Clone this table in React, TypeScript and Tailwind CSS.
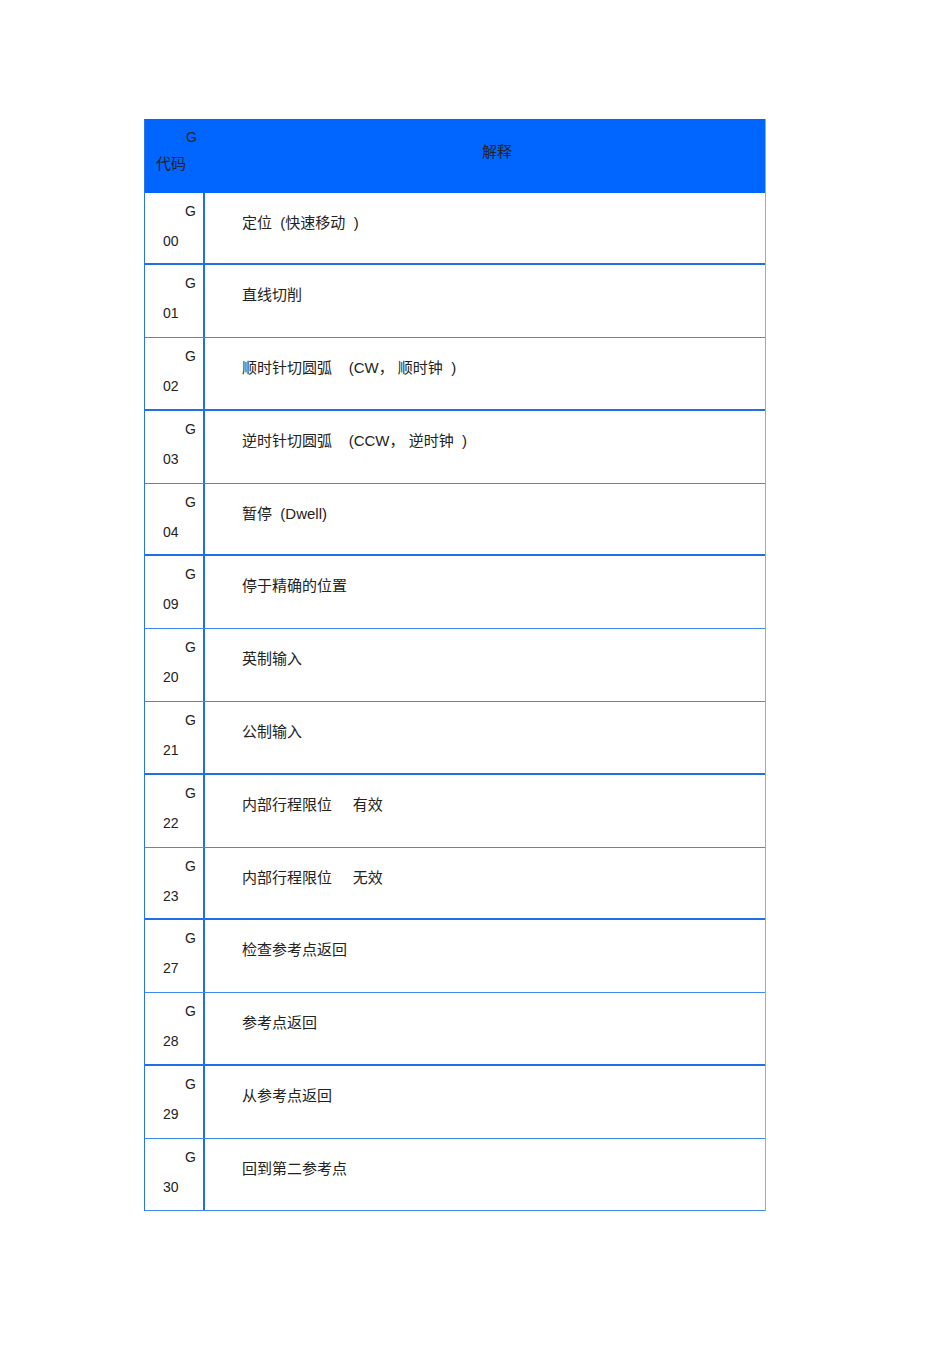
const rows: { code: string; text: string; h: number; thick: boolean }[] = [
  { code: "00", text: "定位  (快速移动  )", h: 72, thick: true },
  { code: "01", text: "直线切削", h: 73, thick: false },
  { code: "02", text: "顺时针切圆弧    (CW， 顺时钟  )", h: 73, thick: true },
  { code: "03", text: "逆时针切圆弧    (CCW， 逆时钟  )", h: 73, thick: false },
  { code: "04", text: "暂停  (Dwell)", h: 72, thick: true },
  { code: "09", text: "停于精确的位置", h: 73, thick: false },
  { code: "20", text: "英制输入", h: 73, thick: false },
  { code: "21", text: "公制输入", h: 73, thick: true },
  { code: "22", text: "内部行程限位     有效", h: 73, thick: false },
  { code: "23", text: "内部行程限位     无效", h: 72, thick: true },
  { code: "27", text: "检查参考点返回", h: 73, thick: false },
  { code: "28", text: "参考点返回", h: 73, thick: true },
  { code: "29", text: "从参考点返回", h: 73, thick: false },
  { code: "30", text: "回到第二参考点", h: 72, thick: false },
];

export default function App() {
  return (
    <div
      className="min-h-[1345px] w-[950px] bg-white pt-[119px] pl-[144px] text-[14px] text-[#222]"
      style={{ fontFamily: '"Liberation Sans", "Noto Sans CJK SC", sans-serif' }}
    >
      <div className="w-[622px] border-l border-r border-l-[#2a76e8] border-r-[#7fb0f0]">
        {/* header */}
        <div className="flex h-[74px] bg-[#0066ff]">
          <div className="flex w-[60px] flex-col pt-[9px] leading-[18px]">
            <span className="self-end pr-[8px]">G</span>
            <span className="mt-[9px] pl-[11px] text-[15px]">代码</span>
          </div>
          <div className="flex-1 pt-[24px] pl-[24px] text-center text-[15px] leading-[18px]">解释</div>
        </div>
        {rows.map((r) => (
          <div
            key={r.code}
            className={
              "flex " +
              (r.thick ? "border-b-2 border-[#1f6fe6]" : "border-b border-[#3d8af5]")
            }
            style={{ height: r.h }}
          >
            <div className="flex w-[60px] flex-col border-r-2 border-[#1f6fe6] pt-[9px] leading-[18px]">
              <span className="self-end pr-[7px]">G</span>
              <span className="mt-[12px] pl-[18px]">{r.code}</span>
            </div>
            <div className="flex-1 pl-[37px] pt-[21px] text-[15px] leading-[18px] whitespace-pre">{r.text}</div>
          </div>
        ))}
      </div>
    </div>
  );
}
